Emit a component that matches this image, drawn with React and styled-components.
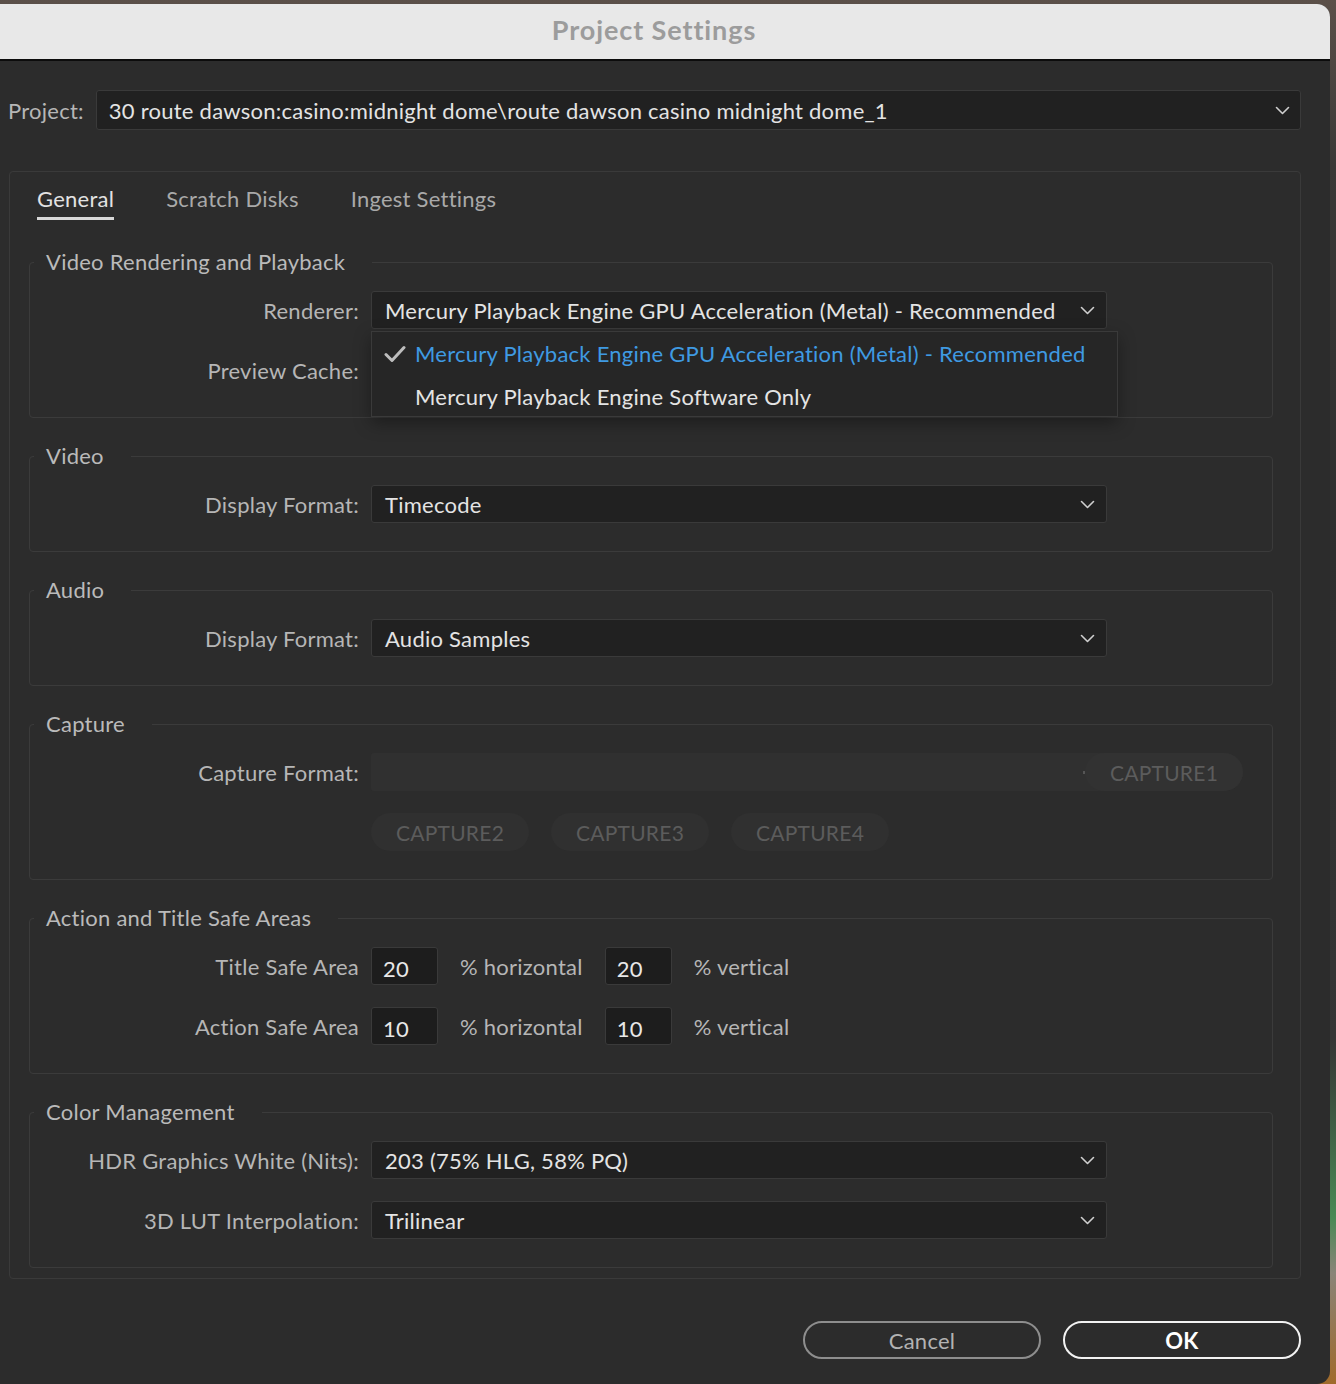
import React from "react";
import styled, { createGlobalStyle } from "styled-components";

const GlobalStyle = createGlobalStyle`
    html, body {
        margin: 0;
        padding: 0;
    }
    body {
        background: linear-gradient(
            180deg,
            #5b5049 0%,
            #3a3836 12%,
            #2e2e2e 40%,
            #353535 75%,
            #4a8a55 88%,
            #8a8478 92%,
            #a06a2a 100%
        );
        font-family: "Lato", "Liberation Sans", sans-serif;
    }
`;

const Chevron = () => (
    <svg width="15" height="9" viewBox="0 0 15 9">
        <polyline
            points="1.5,1.5 7.5,7.5 13.5,1.5"
            fill="none"
            stroke="#cfcfcf"
            strokeWidth="1.6"
            strokeLinecap="round"
            strokeLinejoin="round"
        />
    </svg>
);

const Check = () => (
    <svg width="22" height="18" viewBox="0 0 22 18">
        <polyline
            points="2,9.5 8,15.5 20,2.5"
            fill="none"
            stroke="#bdbdbd"
            strokeWidth="3"
            strokeLinecap="round"
            strokeLinejoin="round"
        />
    </svg>
);

const Dropdown = ({ value, width = 736 }) => (
    <SelectBox style={{ width }}>
        <span>{value}</span>
        <Chevron />
    </SelectBox>
);

const App = () => {
    return (
        <>
            <GlobalStyle />
            <Dialog>
                <TitleBar>Project Settings</TitleBar>
                <Body>
                    <ProjectRow>
                        <Label>Project:</Label>
                        <ProjectSelect>
                            <span>
                                30 route dawson:casino:midnight dome\route
                                dawson casino midnight dome_1
                            </span>
                            <Chevron />
                        </ProjectSelect>
                    </ProjectRow>

                    <Panel>
                        <TabBar>
                            <Tab $active>General</Tab>
                            <Tab>Scratch Disks</Tab>
                            <Tab>Ingest Settings</Tab>
                        </TabBar>

                        <Group>
                            <Legend>Video Rendering and Playback</Legend>
                            <Row>
                                <Label>Renderer:</Label>
                                <MenuAnchor>
                                    <Dropdown value="Mercury Playback Engine GPU Acceleration (Metal) - Recommended" />
                                    <Menu>
                                        <MenuItem $selected>
                                            <CheckSlot>
                                                <Check />
                                            </CheckSlot>
                                            Mercury Playback Engine GPU
                                            Acceleration (Metal) - Recommended
                                        </MenuItem>
                                        <MenuItem>
                                            <CheckSlot />
                                            Mercury Playback Engine Software
                                            Only
                                        </MenuItem>
                                    </Menu>
                                </MenuAnchor>
                            </Row>
                            <Row>
                                <Label>Preview Cache:</Label>
                                <Dropdown value="" />
                            </Row>
                        </Group>

                        <Group>
                            <Legend>Video</Legend>
                            <Row>
                                <Label>Display Format:</Label>
                                <Dropdown value="Timecode" />
                            </Row>
                        </Group>

                        <Group>
                            <Legend>Audio</Legend>
                            <Row>
                                <Label>Display Format:</Label>
                                <Dropdown value="Audio Samples" />
                            </Row>
                        </Group>

                        <Group>
                            <Legend>Capture</Legend>
                            <Row>
                                <Label>Capture Format:</Label>
                                <CaptureField>
                                    <Tick />
                                    <Pill $inField>CAPTURE1</Pill>
                                </CaptureField>
                            </Row>
                            <Row>
                                <span />
                                <PillRow>
                                    <Pill>CAPTURE2</Pill>
                                    <Pill>CAPTURE3</Pill>
                                    <Pill>CAPTURE4</Pill>
                                </PillRow>
                            </Row>
                        </Group>

                        <Group>
                            <Legend>Action and Title Safe Areas</Legend>
                            <Row>
                                <Label>Title Safe Area</Label>
                                <SafeRow>
                                    <NumberBox>20</NumberBox>
                                    <Unit>% horizontal</Unit>
                                    <NumberBox>20</NumberBox>
                                    <Unit>% vertical</Unit>
                                </SafeRow>
                            </Row>
                            <Row>
                                <Label>Action Safe Area</Label>
                                <SafeRow>
                                    <NumberBox>10</NumberBox>
                                    <Unit>% horizontal</Unit>
                                    <NumberBox>10</NumberBox>
                                    <Unit>% vertical</Unit>
                                </SafeRow>
                            </Row>
                        </Group>

                        <Group>
                            <Legend>Color Management</Legend>
                            <Row>
                                <Label>HDR Graphics White (Nits):</Label>
                                <Dropdown value="203 (75% HLG, 58% PQ)" />
                            </Row>
                            <Row>
                                <Label>3D LUT Interpolation:</Label>
                                <Dropdown value="Trilinear" />
                            </Row>
                        </Group>
                    </Panel>

                    <Footer>
                        <Button>Cancel</Button>
                        <Button $primary>OK</Button>
                    </Footer>
                </Body>
            </Dialog>
        </>
    );
};

export default App;

const Dialog = styled.div`
    width: 1330px;
    height: 1380px;
    margin-top: 4px;
    background-color: #2c2c2c;
    border-radius: 0 13px 13px 0;
    overflow: hidden;
    color: #b6b6b6;
    font-size: 22px;
    letter-spacing: 0.25px;
`;

const TitleBar = styled.div`
    height: 57px;
    padding: 0 22px 4px 0;
    box-sizing: border-box;
    background-color: #e8e8e8;
    border-bottom: 2px solid #0c0c0c;
    display: flex;
    align-items: center;
    justify-content: center;
    color: #9c9c9c;
    font-weight: 700;
    font-size: 27px;
    letter-spacing: 0.9px;
`;

const Body = styled.div`
    padding: 29px 29px 0 8px;
`;

const ProjectRow = styled.div`
    display: flex;
    align-items: center;
    gap: 12px;
`;

const Label = styled.span`
    color: #b6b6b6;
    text-align: right;
    white-space: nowrap;
`;

const SelectBox = styled.div`
    box-sizing: border-box;
    height: 38px;
    display: flex;
    align-items: center;
    justify-content: space-between;
    padding: 0 11px 0 13px;
    background-color: #212121;
    border: 1px solid #3a3a3a;
    border-radius: 3px;
    color: #e4e4e4;
    white-space: nowrap;
`;

const ProjectSelect = styled(SelectBox)`
    flex: 1;
    height: 40px;
    padding-left: 12px;
    padding-right: 10px;
`;

const Panel = styled.div`
    margin: 41px 0 0 1px;
    border: 1px solid #3a3a3a;
    border-radius: 4px;
    padding: 14px 27px 10px 19px;
`;

const TabBar = styled.div`
    display: flex;
    gap: 52px;
    margin: 0 0 28px 8px;
`;

const Tab = styled.div`
    line-height: 26px;
    padding-bottom: 5px;
    border-bottom: 3px solid
        ${(p) => (p.$active ? "#d8d8d8" : "transparent")};
    color: ${(p) => (p.$active ? "#e2e2e2" : "#a9a9a9")};
`;

const Group = styled.fieldset`
    margin: 0 0 24px 0;
    padding: 15px 0 28px 0;
    border: 1px solid #3b3b3b;
    border-radius: 4px;
    min-width: 0;

    &:last-child {
        margin-bottom: 0;
    }
`;

const Legend = styled.legend`
    margin-left: 4px;
    padding: 0 27px 0 12px;
    line-height: 28px;
    color: #bababa;
`;

const Row = styled.div`
    display: grid;
    grid-template-columns: 329px 1fr;
    column-gap: 12px;
    align-items: center;

    & + & {
        margin-top: 22px;
    }
`;

const MenuAnchor = styled.div`
    position: relative;
`;

const Menu = styled.div`
    position: absolute;
    top: 40px;
    left: 0;
    width: 747px;
    box-sizing: border-box;
    height: 86px;
    background-color: #262626;
    border: 1px solid #3a3a3a;
    box-shadow: 0 6px 16px rgba(0, 0, 0, 0.35);
    z-index: 2;
`;

const MenuItem = styled.div`
    height: 43px;
    display: flex;
    align-items: center;
    color: ${(p) => (p.$selected ? "#3f9ae2" : "#e4e4e4")};
    white-space: nowrap;
`;

const CheckSlot = styled.span`
    width: 43px;
    display: flex;
    justify-content: center;
    padding-left: 2px;
    box-sizing: border-box;
`;

const CaptureField = styled.div`
    width: 872px;
    height: 38px;
    display: flex;
    align-items: center;
    justify-content: flex-end;
    background-color: #303030;
    border-radius: 3px 19px 19px 3px;
`;

const Tick = styled.span`
    width: 2px;
    height: 3px;
    background-color: #555;
`;

const Pill = styled.div`
    width: 158px;
    height: 38px;
    box-sizing: border-box;
    display: flex;
    align-items: center;
    justify-content: center;
    border-radius: 19px;
    background-color: ${(p) => (p.$inField ? "#323232" : "#303030")};
    color: #5c5c5c;
    font-size: 21px;
`;

const PillRow = styled.div`
    display: flex;
    gap: 22px;
`;

const SafeRow = styled.div`
    display: flex;
    align-items: center;
    gap: 22px;
`;

const NumberBox = styled.div`
    width: 67px;
    height: 38px;
    box-sizing: border-box;
    padding: 4px 0 0 11px;
    display: flex;
    align-items: center;
    background-color: #1d1d1d;
    border: 1px solid #3a3a3a;
    border-radius: 3px;
    color: #e8e8e8;
`;

const Unit = styled.span`
    color: #b6b6b6;
    white-space: nowrap;
`;

const Footer = styled.div`
    display: flex;
    justify-content: flex-end;
    gap: 22px;
    padding-top: 42px;
`;

const Button = styled.button`
    width: 238px;
    height: 38px;
    border-radius: 19px;
    background: transparent;
    font-family: inherit;
    font-size: 22px;
    letter-spacing: 0.25px;
    border: 2px solid ${(p) => (p.$primary ? "#f2f2f2" : "#8e8e8e")};
    color: ${(p) => (p.$primary ? "#ffffff" : "#b3b3b3")};
    font-weight: ${(p) => (p.$primary ? 700 : 400)};
`;
